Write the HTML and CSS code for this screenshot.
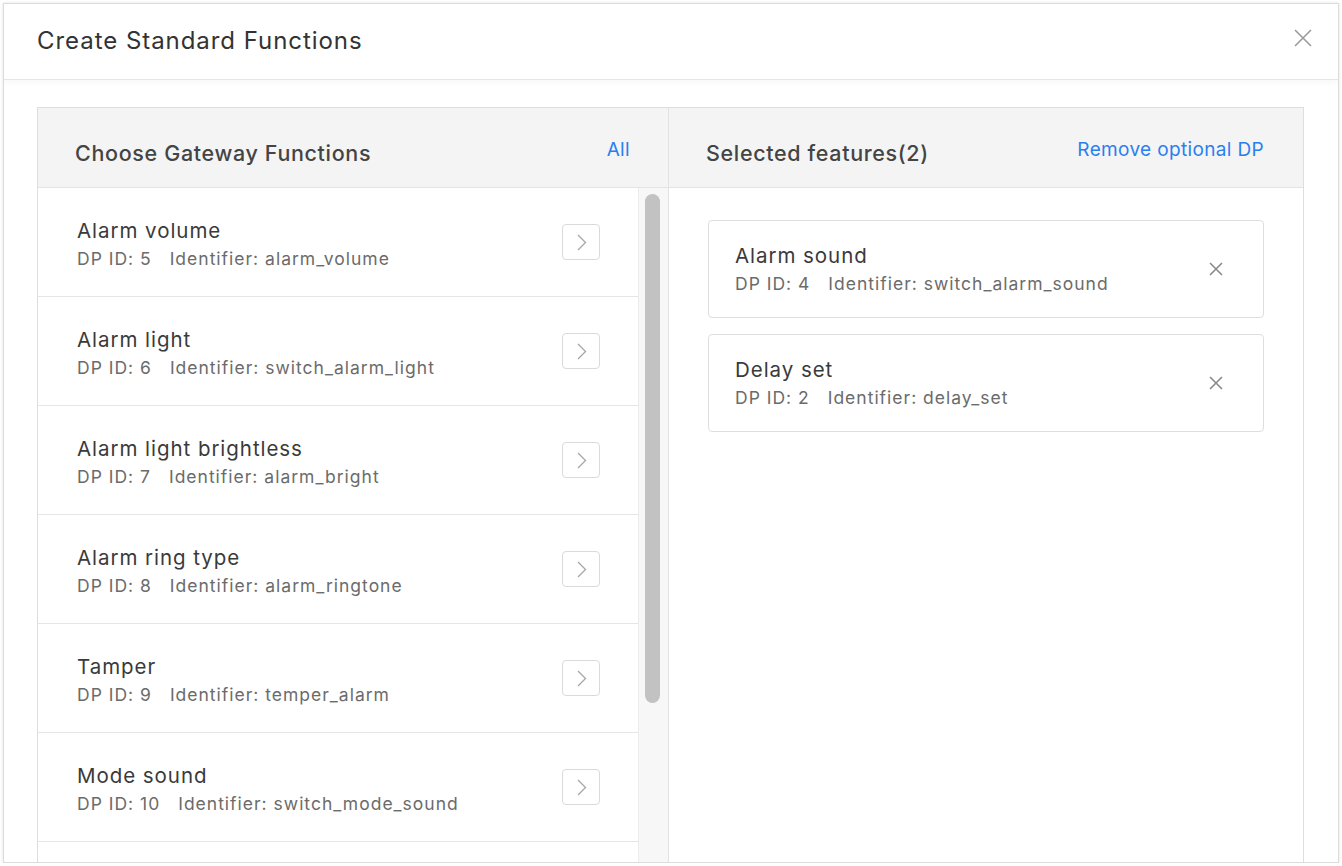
FILE: index.html
```html
<!DOCTYPE html>
<html>
<head>
<meta charset="utf-8">
<link rel="stylesheet" href="styles.css">
</head>
<body>
<div class="modal">
  <div class="modal-header">
    <div class="modal-title">Create Standard Functions</div>
    <button class="close-btn" aria-label="close">
      <svg width="18" height="18" viewBox="0 0 18 18"><path d="M1 1L17 17M17 1L1 17" stroke="#9a9a9a" stroke-width="1.6" fill="none"/></svg>
    </button>
  </div>
  <div class="modal-body">
    <div class="panel">
      <div class="col col-left">
        <div class="col-head">
          <span class="col-title">Choose Gateway Functions</span>
          <a class="link link-all">All</a>
        </div>
        <div class="list-wrap">
          <div class="list">
            <div class="row">
              <div class="row-text"><div class="name">Alarm volume</div><div class="meta"><span>DP ID: 5</span><span>Identifier: alarm_volume</span></div></div>
              <span class="arrow"><svg width="11" height="17" viewBox="0 0 11 17"><path d="M2 1L9.5 8.5L2 16" stroke="#a6a6a6" stroke-width="1.3" fill="none"/></svg></span>
            </div>
            <div class="row">
              <div class="row-text"><div class="name">Alarm light</div><div class="meta"><span>DP ID: 6</span><span>Identifier: switch_alarm_light</span></div></div>
              <span class="arrow"><svg width="11" height="17" viewBox="0 0 11 17"><path d="M2 1L9.5 8.5L2 16" stroke="#a6a6a6" stroke-width="1.3" fill="none"/></svg></span>
            </div>
            <div class="row">
              <div class="row-text"><div class="name">Alarm light brightless</div><div class="meta"><span>DP ID: 7</span><span>Identifier: alarm_bright</span></div></div>
              <span class="arrow"><svg width="11" height="17" viewBox="0 0 11 17"><path d="M2 1L9.5 8.5L2 16" stroke="#a6a6a6" stroke-width="1.3" fill="none"/></svg></span>
            </div>
            <div class="row">
              <div class="row-text"><div class="name">Alarm ring type</div><div class="meta"><span>DP ID: 8</span><span>Identifier: alarm_ringtone</span></div></div>
              <span class="arrow"><svg width="11" height="17" viewBox="0 0 11 17"><path d="M2 1L9.5 8.5L2 16" stroke="#a6a6a6" stroke-width="1.3" fill="none"/></svg></span>
            </div>
            <div class="row">
              <div class="row-text"><div class="name">Tamper</div><div class="meta"><span>DP ID: 9</span><span>Identifier: temper_alarm</span></div></div>
              <span class="arrow"><svg width="11" height="17" viewBox="0 0 11 17"><path d="M2 1L9.5 8.5L2 16" stroke="#a6a6a6" stroke-width="1.3" fill="none"/></svg></span>
            </div>
            <div class="row">
              <div class="row-text"><div class="name">Mode sound</div><div class="meta"><span>DP ID: 10</span><span>Identifier: switch_mode_sound</span></div></div>
              <span class="arrow"><svg width="11" height="17" viewBox="0 0 11 17"><path d="M2 1L9.5 8.5L2 16" stroke="#a6a6a6" stroke-width="1.3" fill="none"/></svg></span>
            </div>
            <div class="row"></div>
          </div>
          <div class="track"><div class="thumb"></div></div>
        </div>
      </div>
      <div class="col col-right">
        <div class="col-head">
          <span class="col-title">Selected features(2)</span>
          <a class="link">Remove optional DP</a>
        </div>
        <div class="cards">
          <div class="card">
            <div class="row-text"><div class="name">Alarm sound</div><div class="meta"><span>DP ID: 4</span><span>Identifier: switch_alarm_sound</span></div></div>
            <span class="remove"><svg width="14" height="14" viewBox="0 0 14 14"><path d="M1 1L13 13M13 1L1 13" stroke="#8a8a8a" stroke-width="1.6" fill="none"/></svg></span>
          </div>
          <div class="card">
            <div class="row-text"><div class="name">Delay set</div><div class="meta"><span>DP ID: 2</span><span>Identifier: delay_set</span></div></div>
            <span class="remove"><svg width="14" height="14" viewBox="0 0 14 14"><path d="M1 1L13 13M13 1L1 13" stroke="#8a8a8a" stroke-width="1.6" fill="none"/></svg></span>
          </div>
        </div>
      </div>
    </div>
  </div>
</div>
</body>
</html>
```
FILE: styles.css
```css
* { box-sizing: border-box; }
html, body { margin: 0; padding: 0; background: #fff; }
body {
  font-family: "Inter", "Noto Sans", "Liberation Sans", sans-serif;
  color: #333;
  overflow: hidden;
}
.modal {
  margin: 3px 0 0 3px;
  width: 1336px;
  height: 860px;
  border: 1px solid #dcdcdc;
  box-shadow: 0 0 3px rgba(0,0,0,0.12);
  overflow: hidden;
  background: #fff;
  display: flex;
  flex-direction: column;
}
.modal-header {
  height: 76px;
  flex: none;
  border-bottom: 1px solid #e6e6e6;
  display: flex;
  align-items: center;
  justify-content: space-between;
  padding: 0 26px 0 33px;
  box-shadow: 0 2px 6px rgba(0,0,0,0.04);
}
.modal-title {
  font-size: 24px;
  color: #333;
  letter-spacing: 0.95px;
  margin-top: -2px;
}
.close-btn {
  border: none;
  background: none;
  padding: 0;
  width: 18px;
  height: 18px;
  margin-top: -8px;
  display: flex;
}
.modal-body {
  flex: 1;
  padding: 27px 34px 0 33px;
  min-height: 0;
}
.panel {
  height: 100%;
  border: 1px solid #dedede;
  border-bottom: none;
  display: grid;
  grid-template-columns: 631px 1fr;
}
.col { display: flex; flex-direction: column; min-height: 0; }
.col-left { border-right: 1px solid #e2e2e2; }
.col-head {
  height: 80px;
  flex: none;
  background: #f4f4f4;
  border-bottom: 1px solid #e4e4e4;
  display: flex;
  align-items: center;
  justify-content: space-between;
}
.col-left .col-head { padding: 0 38px 0 37px; }
.col-right .col-head { padding: 0 39px 0 37px; }
.col-title {
  font-size: 21.5px;
  font-weight: 500;
  color: #444;
  letter-spacing: 0.65px;
  margin-top: 10px;
}
.link {
  color: #2a7ff0;
  font-size: 19px;
  letter-spacing: 0.35px;
  margin-top: 4px;
}
.list-wrap {
  flex: 1;
  display: flex;
  min-height: 0;
}
.list { flex: 1; }
.row {
  height: 109px;
  border-bottom: 1px solid #e6e6e6;
  display: flex;
  align-items: flex-start;
  justify-content: space-between;
  padding: 31px 39px 0 39px;
}
.row-text { display: flex; flex-direction: column; }
.name {
  font-size: 20.5px;
  color: #3a3a3a;
  line-height: 24px;
  letter-spacing: 0.95px;
}
.meta {
  font-size: 17.5px;
  color: #6b6b6b;
  line-height: 22px;
  letter-spacing: 1px;
  margin-top: 5px;
  display: flex;
  gap: 18px;
}
.arrow {
  width: 38px;
  height: 36px;
  border: 1px solid #dadada;
  border-radius: 4px;
  display: flex;
  align-items: center;
  justify-content: center;
  margin-top: 5px;
  margin-right: -1px;
}
.track {
  width: 30px;
  flex: none;
  background: #f7f7f7;
  border-left: 1px solid #ececec;
  padding: 6px 7px 0 6px;
}
.thumb {
  width: 15px;
  height: 509px;
  border-radius: 8px;
  background: #c2c2c2;
}
.cards {
  padding: 32px 39px 0 39px;
  display: flex;
  flex-direction: column;
  gap: 16px;
}
.card {
  height: 98px;
  border: 1px solid #dedede;
  border-radius: 4px;
  display: flex;
  align-items: center;
  justify-content: space-between;
  padding: 0 40px 0 26px;
}
.remove { display: flex; }
```
